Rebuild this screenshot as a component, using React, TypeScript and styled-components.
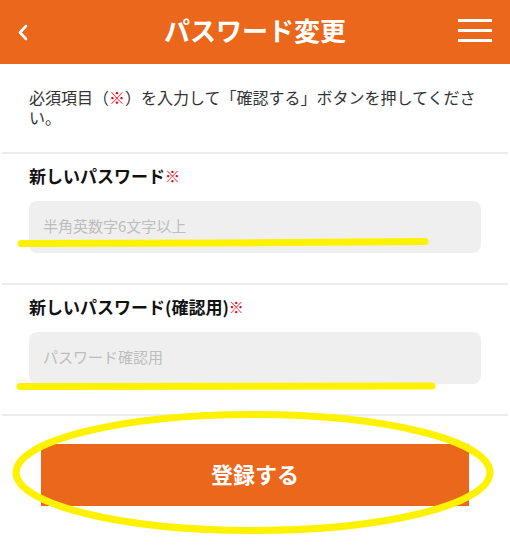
import React from "react";
import styled, { createGlobalStyle } from "styled-components";

const Global = createGlobalStyle`
  html, body { margin: 0; padding: 0; background: #fff; }
  body { font-family: "Noto Sans CJK JP", "Noto Sans", sans-serif; }
  * { box-sizing: border-box; }
`;

const Page = styled.div`
  position: relative;
  width: 510px;
  height: 560px;
  overflow: hidden;
  background: #fff;
`;

const Header = styled.header`
  height: 64px;
  background: #ea671c;
  display: grid;
  grid-template-columns: 60px 1fr 60px;
  align-items: center;
`;

const BackBtn = styled.div`
  display: flex;
  align-items: center;
  padding-left: 16px;
  height: 100%;
`;

const Title = styled.h1`
  margin: 0;
  text-align: center;
  color: #fff;
  font-size: 26px;
  font-weight: 700;
  line-height: 1;
  padding-bottom: 4px;
`;

const Menu = styled.div`
  display: flex;
  flex-direction: column;
  justify-content: center;
  align-items: flex-end;
  gap: 7.5px;
  padding-right: 18px;
  padding-bottom: 3px;
  height: 100%;
`;

const MenuLine = styled.span`
  display: block;
  width: 34px;
  height: 2.5px;
  background: #fff;
`;

const Intro = styled.p`
  margin: 0;
  padding: 23px 29px 25px 29px;
  font-size: 16px;
  line-height: 20px;
  color: #333;
`;

const Req = styled.span<{ $size?: number }>`
  color: #e60012;
  font-size: ${(p) => p.$size ?? 16}px;
  font-weight: 700;
`;

const Divider = styled.hr`
  margin: 0 2px;
  border: 0;
  height: 2px;
  background: #ececec;
`;

const Field = styled.section`
  padding: 10px 29px 30px 29px;
  display: flex;
  flex-direction: column;
  gap: 13px;
`;

const Label = styled.label`
  font-size: 17px;
  font-weight: 700;
  line-height: 24px;
  color: #111;
  display: flex;
  align-items: center;
`;

const Input = styled.input`
  width: 452px;
  height: 52px;
  border: 0;
  border-radius: 8px;
  background: #efefef;
  padding: 0 14px 4px 14px;
  font-family: inherit;
  font-size: 15px;
  outline: none;
  &::placeholder { color: #bdbdbd; }
`;

const ButtonWrap = styled.div`
  padding: 28px 41px 0 41px;
`;

const Submit = styled.button`
  width: 428px;
  height: 62px;
  border: 0;
  background: #ea671c;
  color: #fff;
  font-family: inherit;
  font-size: 22px;
  font-weight: 700;
  cursor: pointer;
  padding-bottom: 5px;
`;

const Marks = styled.svg`
  position: absolute;
  left: 0;
  top: 0;
  pointer-events: none;
`;

export default function App() {
  return (
    <Page>
      <Global />
      <Header>
        <BackBtn>
          <svg width="14" height="18" viewBox="0 0 14 18">
            <path d="M10 3 L4 9.5 L10 16" fill="none" stroke="#fff" strokeWidth="2.6" strokeLinecap="round" strokeLinejoin="round" />
          </svg>
        </BackBtn>
        <Title>パスワード変更</Title>
        <Menu>
          <MenuLine />
          <MenuLine />
          <MenuLine />
        </Menu>
      </Header>
      <Intro>
        必須項目（<Req>※</Req>）を入力して「確認する」ボタンを押してください。
      </Intro>
      <Divider />
      <Field>
        <Label>
          新しいパスワード<Req $size={15}>※</Req>
        </Label>
        <Input type="password" placeholder="半角英数字6文字以上" />
      </Field>
      <Divider />
      <Field>
        <Label>
          新しいパスワード(確認用)<Req $size={15}>※</Req>
        </Label>
        <Input type="password" placeholder="パスワード確認用" />
      </Field>
      <Divider />
      <ButtonWrap>
        <Submit>登録する</Submit>
      </ButtonWrap>
      <Marks width="510" height="560" viewBox="0 0 510 560">
        <path d="M21 243.5 L222 243 L425 241.5" fill="none" stroke="#fff200" strokeWidth="7" strokeLinecap="round" />
        <path d="M20 386.5 L432 386" fill="none" stroke="#fff200" strokeWidth="7" strokeLinecap="round" />
        <ellipse cx="253" cy="472.5" rx="237" ry="58" fill="none" stroke="#fff200" strokeWidth="7" />
      </Marks>
    </Page>
  );
}
